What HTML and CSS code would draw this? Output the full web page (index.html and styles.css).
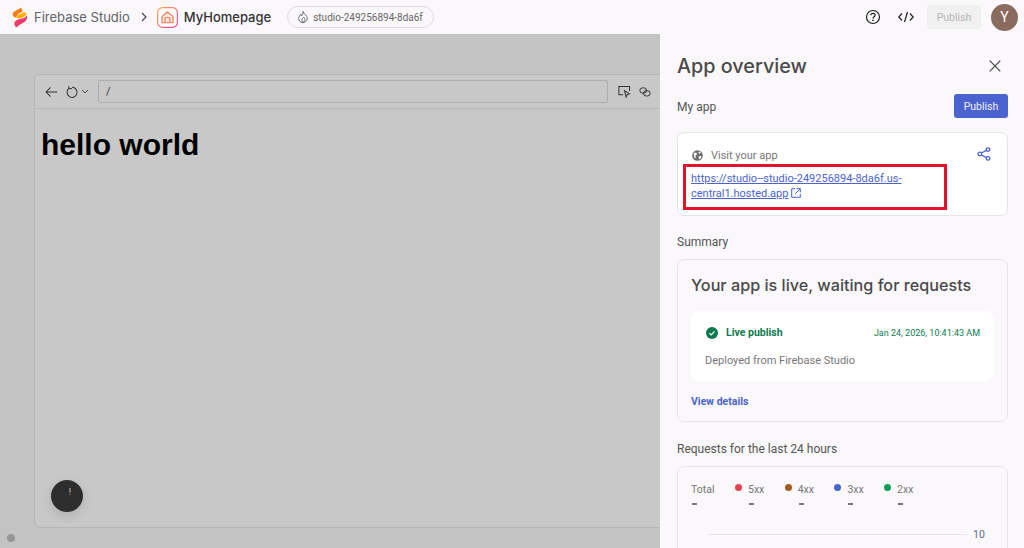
FILE: index.html
```html
<!DOCTYPE html>
<html lang="en">
<head>
<meta charset="utf-8">
<title>Firebase Studio</title>
<link rel="stylesheet" href="styles.css">
</head>
<body>
<header class="topbar">
  <div class="crumbs">
    <svg class="fb-logo" width="16" height="21" viewBox="0 0 16 21"><path d="M8.6 0.5 C9.6 1.6 10.3 3 10.4 4.4 C8 5.6 5 7.2 3.6 10.6 C1.6 9.8 0.2 8.4 0.8 6.4 C1.6 3.8 6.6 3.2 8.6 0.5Z" fill="#ff7a1a"/><path d="M3.6 10.6 C5.4 7.4 10 5.6 14.2 5.2 C14.8 7.4 13.6 9.2 11.4 10.2 C8.8 11.4 5.8 11.8 3.6 10.6Z" fill="#ffb000"/><path d="M14.8 8.4 C16 11.6 13.8 14.4 10.4 16.2 C8 17.5 5.6 19 4.6 20.6 C2.8 19.4 1.8 17.2 2.6 15.2 C3.6 13 7 12.4 10 11.6 C12 11.1 14 10 14.8 8.4Z" fill="#f23a6e"/></svg>
    <span class="brand">Firebase Studio</span>
    <svg class="chev" width="8" height="10" viewBox="0 0 8 10"><path d="M2 1 L6 5 L2 9" fill="none" stroke="#444" stroke-width="1.1"/></svg>
    <svg class="app-icon" width="21" height="21" viewBox="0 0 21 21">
      <defs><linearGradient id="appgrad" x1="0" y1="0" x2="1" y2="1"><stop offset="0" stop-color="#ffa84d"/><stop offset="1" stop-color="#f0409a"/></linearGradient></defs>
      <rect x="0.6" y="0.6" width="19.8" height="19.8" rx="5" fill="#fff" stroke="url(#appgrad)" stroke-width="1.2"/>
      <path d="M5 9.6 L10.5 5 L16 9.6 V15.8 H5Z" fill="#fdebe4" stroke="#f0734f" stroke-width="1.1" stroke-linejoin="round"/>
      <path d="M8 15.8 V12 C8 9.6 13 9.6 13 12 V15.8" fill="none" stroke="#f0734f" stroke-width="1.1"/>
    </svg>
    <span class="app-name">MyHomepage</span>
    <span class="project-chip">
      <svg width="12" height="14" viewBox="0 0 13 14"><path d="M6.5 1 C7 3.5 11.2 5.2 11.2 8.6 C11.2 11.2 9 13 6.5 13 C4 13 1.8 11.2 1.8 8.6 C1.8 6.6 3.3 5.6 4 4 C4.6 4.6 4.9 5.2 5 5.8 C6 4.5 6.6 2.8 6.5 1Z" fill="none" stroke="#5f6368" stroke-width="1"/><path d="M6.5 13 C4.8 11 5 8.8 7.5 7.2 C9 9 9 11.2 6.5 13Z" fill="none" stroke="#5f6368" stroke-width="1"/></svg>
      <span>studio-249256894-8da6f</span>
    </span>
  </div>
  <div class="actions">
    <svg class="help" width="16" height="16" viewBox="0 0 16 16"><circle cx="8" cy="8" r="6.5" fill="none" stroke="#222" stroke-width="1.2"/><path d="M5.9 6.3 C5.9 3.8 10.1 3.8 10.1 6.2 C10.1 7.8 8 7.7 8 9.5" fill="none" stroke="#222" stroke-width="1.2"/><circle cx="8" cy="11.4" r="0.8" fill="#222"/></svg>
    <svg class="code" width="16" height="12" viewBox="0 0 16 12"><path d="M4 2.5 L0.8 6 L4 9.5 M12 2.5 L15.2 6 L12 9.5 M9.5 1 L6.5 11" fill="none" stroke="#222" stroke-width="1.2"/></svg>
    <span class="publish-off">Publish</span>
    <span class="avatar">Y</span>
  </div>
</header>
<main class="workspace">
  <section class="stage">
    <div class="preview">
      <div class="toolbar">
        <svg width="13" height="12" viewBox="0 0 14 12"><path d="M6 1 L1.2 6 L6 11 M1.2 6 H13" fill="none" stroke="#333" stroke-width="1.1"/></svg>
        <svg class="reload" width="13" height="14" viewBox="0 0 14 14"><path d="M3.4 3 A5.4 5.4 0 1 0 6.5 2 M2.8 0.6 L3.4 3.4 L6.4 3.2" fill="none" stroke="#333" stroke-width="1.1"/></svg>
        <svg class="small-chev" width="8" height="6" viewBox="0 0 8 6"><path d="M1 1 L4 4 L7 1" fill="none" stroke="#444" stroke-width="1"/></svg>
        <div class="address">/</div>
        <svg class="tool-a" width="14" height="13" viewBox="0 0 14 14"><path d="M6 10.5 H1.5 V1.5 H13 V6.5" fill="none" stroke="#333" stroke-width="1.1"/><path d="M7.5 6 L13 9.5 L10.4 10.3 L9.3 13 Z" fill="none" stroke="#333" stroke-width="1.1"/></svg>
        <svg class="tool-b" width="12" height="10" viewBox="0 0 14 12"><rect x="0.8" y="1" width="8" height="6.4" rx="3.2" fill="none" stroke="#333" stroke-width="1.2"/><rect x="5.2" y="4.4" width="8" height="6.4" rx="3.2" fill="none" stroke="#333" stroke-width="1.2"/></svg>
      </div>
      <h1 class="hello">hello world</h1>
    </div>
    <button class="fab">!</button>
    <span class="status-dot"></span>
  </section>
  <aside class="panel">
    <div class="panel-head">
      <h2>App overview</h2>
      <svg width="12" height="12" viewBox="0 0 12 12"><path d="M0.7 0.7 L11.3 11.3 M11.3 0.7 L0.7 11.3" stroke="#444" stroke-width="1.2"/></svg>
    </div>
    <div class="myapp-row">
      <span class="label nudge">My app</span>
      <span class="publish-on">Publish</span>
    </div>
    <div class="card visit">
      <div class="visit-top">
        <div class="visit-title">
          <svg width="11" height="11" viewBox="0 0 12 12"><circle cx="6" cy="6" r="5.8" fill="#6b6b6b"/><path d="M1.8 3.2 L4.8 2.6 L5.4 4.8 L3.6 6.4 L4.6 9.4 L2.4 8 Z M7.6 1.4 L9.8 3 L8.2 4.4 L7 3.4Z M7 7 L10.4 6.4 L9.6 9.2 L7.6 10.2Z" fill="#fff"/></svg>
          <span>Visit your app</span>
        </div>
        <svg class="share" width="14" height="14" viewBox="0 0 14 14"><circle cx="11" cy="2.6" r="1.8" fill="none" stroke="#4a63cf" stroke-width="1.3"/><circle cx="11" cy="11.4" r="1.8" fill="none" stroke="#4a63cf" stroke-width="1.3"/><circle cx="2.8" cy="7" r="1.8" fill="none" stroke="#4a63cf" stroke-width="1.3"/><path d="M4.4 6 L9.4 3.4 M4.4 8 L9.4 10.6" stroke="#4a63cf" stroke-width="1.3"/></svg>
      </div>
      <div class="link-box">
        <a class="url">https://studio--studio-249256894-8da6f.us-central1.hosted.app</a>
        <svg class="ext" width="10" height="10" viewBox="0 0 10 10"><path d="M4 0.7 H0.7 V9.3 H9.3 V6 M5.5 0.7 H9.3 V4.5 M9.3 0.7 L4 6" fill="none" stroke="#4a63cf" stroke-width="1"/></svg>
      </div>
    </div>
    <div class="label section">Summary</div>
    <div class="card summary">
      <h3>Your app is live, waiting for requests</h3>
      <div class="live-box">
        <div class="live-row">
          <span class="live-title">
            <svg width="12" height="12" viewBox="0 0 12 12"><circle cx="6" cy="6" r="6" fill="#0b7a4f"/><path d="M3.4 6.1 L5.2 7.9 L8.6 4.4" fill="none" stroke="#fff" stroke-width="1.1"/></svg>
            <b>Live publish</b>
          </span>
          <span class="live-date">Jan 24, 2026, 10:41:43 AM</span>
        </div>
        <div class="deployed">Deployed from Firebase Studio</div>
      </div>
      <a class="details">View details</a>
    </div>
    <div class="label section section-wide">Requests for the last 24 hours</div>
    <div class="card requests">
      <div class="legend">
        <div class="stat total"><span>Total</span><span class="dash"></span></div>
        <div class="stat"><span><i class="dot red"></i>5xx</span><span class="dash"></span></div>
        <div class="stat"><span><i class="dot brown"></i>4xx</span><span class="dash"></span></div>
        <div class="stat"><span><i class="dot blue"></i>3xx</span><span class="dash"></span></div>
        <div class="stat"><span><i class="dot green"></i>2xx</span><span class="dash"></span></div>
      </div>
      <div class="gridline"><i></i><span>10</span></div>
    </div>
  </aside>
</main>
</body>
</html>
```
FILE: styles.css
```css
* { box-sizing: border-box; }
html, body { margin: 0; height: 100%; overflow: hidden; }
body { width: 1024px; height: 548px; font-family: "Roboto", "Liberation Sans", sans-serif; background: #faf8fa; color: #444; display: flex; flex-direction: column; }
h1, h2, h3 { margin: 0; font-weight: 400; }

.topbar { height: 34px; flex: none; display: flex; align-items: center; justify-content: space-between; padding: 0 6px 0 12px; background: #faf8fa; }
.crumbs, .actions { display: flex; align-items: center; }
.brand { margin-left: 6px; font: 13px "Inter", sans-serif; color: #5f6368; }
.chev { margin-left: 10px; }
.app-icon { margin-left: 9px; }
.app-name { margin-left: 6px; font: 500 13px "Inter", sans-serif; color: #333; }
.project-chip { margin-left: 16px; height: 22px; padding: 0 10px 0 9px; display: flex; align-items: center; gap: 4px; border: 1px solid #dedcde; border-radius: 11px; font-size: 10px; color: #666; }

.actions svg.help { margin-right: 17px; }
.actions svg.code { margin-right: 13px; }
.publish-off { width: 54px; height: 24px; margin-right: 10px; display: flex; align-items: center; justify-content: center; border-radius: 3px; background: #f1f0f1; color: #b5b5b5; font-size: 10.5px; }
.avatar { width: 27px; height: 27px; border-radius: 50%; background: #8c6b5f; color: #fff; display: flex; align-items: center; justify-content: center; font-size: 14px; }

.workspace { flex: 1; min-height: 0; display: flex; }
.stage { position: relative; flex: 1; min-width: 0; background: #c3c3c3; padding: 40px 0 20px 34px; overflow: hidden; }
.preview { width: 700px; height: 100%; border: 1px solid #b6b6b6; border-radius: 6px; background: #c8c8c8; }
.toolbar { height: 34px; display: flex; align-items: center; padding-left: 10px; border-bottom: 1px solid #b6b6b6; }
.reload { margin-left: 8px; }
.small-chev { margin-left: 2px; }
.address { width: 510px; height: 23px; margin-left: 9px; padding-left: 7px; border: 1px solid #aeaeae; border-radius: 2px; font-size: 11px; line-height: 22px; color: #333; }
.tool-a { margin-left: 9px; }
.tool-b { margin-left: 8px; }
.hello { margin: 19px 0 0 6px; font: 700 30px "Liberation Sans", sans-serif; color: #000; }
.fab { position: absolute; left: 51px; top: 446px; width: 32px; height: 32px; padding: 0 0 8px 6px; border: 0; border-radius: 50%; background: #2e2e2e; color: #ccc; font: 9px "Roboto", sans-serif; box-shadow: 0 4px 12px rgba(0,0,0,.12); }
.status-dot { position: absolute; left: 7px; top: 500px; width: 8px; height: 8px; border-radius: 50%; background: #979797; }

.panel { width: 364px; flex: none; padding: 0 16px 0 17px; overflow: hidden; background: #faf8fa; }
.panel-head { height: 62px; padding: 2px 7px 0 0; display: flex; align-items: center; justify-content: space-between; }
.panel-head h2 { font: 500 19.8px "Inter", sans-serif; color: #4a4a4a; }
.myapp-row { height: 24px; margin-top: -2px; display: flex; align-items: center; justify-content: space-between; }
.label { font-size: 12px; color: #555; }
.nudge { padding-top: 2px; }
.publish-on { width: 54px; height: 24px; display: flex; align-items: center; justify-content: center; border-radius: 3px; background: #4a63cf; color: #f2f2f8; font-size: 10.5px; }
.card { border: 1px solid #e6e4e6; border-radius: 7px; }
.visit { height: 84px; margin-top: 14px; background: #fff; padding: 14px 15px 0 14px; }
.visit-top { height: 16px; display: flex; justify-content: space-between; align-items: center; }
.visit-title { display: flex; align-items: center; gap: 8px; font-size: 11px; color: #777; }
.share { margin: 0 1px 2px 0; }
.link-box { width: 264px; height: 46px; margin: 1px 0 0 -9px; padding: 4px 5px 0 5px; border: 3px solid #e8112d; font-size: 11px; line-height: 15px; color: #4a63cf; }
.url { text-decoration: underline; }
.ext { margin-left: 0; vertical-align: -1px; }
.section { margin-top: 19px; }
.section-wide { margin-top: 20px; }
.summary { height: 163px; margin-top: 10px; padding: 15px 13px 0 13px; }
.summary h3 { font: 500 16.2px "Inter", sans-serif; color: #4a4a4a; }
.live-box { height: 70px; margin-top: 16px; padding: 0 14px; background: #fff; border-radius: 8px; }
.live-row { display: flex; justify-content: space-between; align-items: center; padding-top: 15px; }
.live-title { display: flex; align-items: center; gap: 8px; font-size: 10.5px; color: #0b7a4f; margin-left: 1px; }
.live-date { font-size: 9px; color: #0b7a4f; }
.deployed { margin-top: 15px; font-size: 11px; color: #777; }
.details { display: block; margin-top: 14px; font-size: 10.5px; font-weight: 700; color: #4a63cf; }
.requests { height: 100px; margin-top: 10px; padding: 16px 13px 0 13px; }
.legend { display: flex; }
.stat { width: 49.7px; display: flex; flex-direction: column; font-size: 10.5px; color: #777; }
.stat.total { width: 44px; }
.dash { width: 5px; height: 1.5px; margin: 7px 0 0 14px; background: #777; }
.total .dash { margin-left: 1px; }
.dot { display: inline-block; width: 7px; height: 7px; margin-right: 6px; border-radius: 50%; vertical-align: 2px; }
.red { background: #e8404e; }
.brown { background: #a85a1e; }
.blue { background: #4a63cf; }
.green { background: #0f9d58; }
.gridline { display: flex; align-items: center; margin-top: 23px; padding-left: 17px; }
.gridline i { width: 259px; height: 1px; background: #e6e4e6; }
.gridline span { margin-left: 6px; font-size: 10.5px; color: #5c6b8a; }
```
